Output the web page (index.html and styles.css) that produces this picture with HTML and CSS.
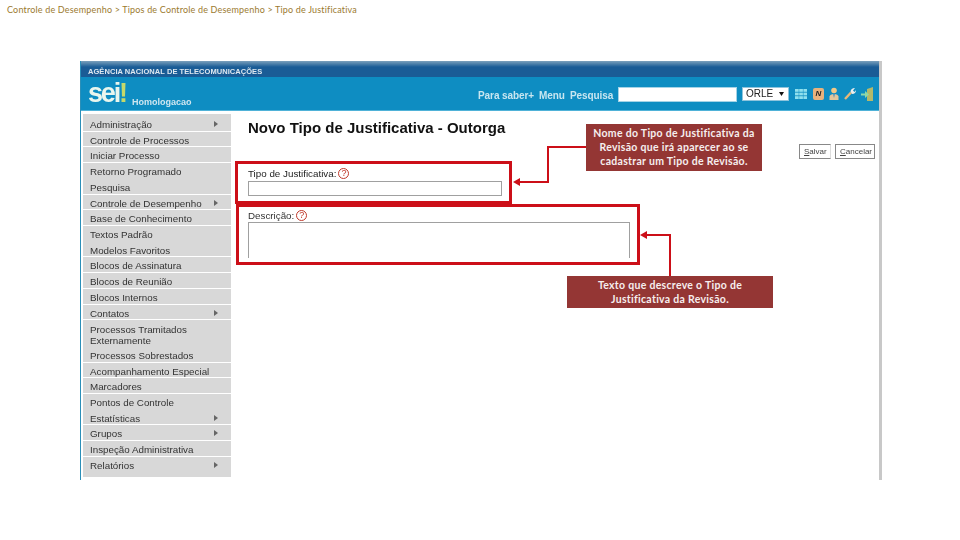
FILE: index.html
```html
<!DOCTYPE html>
<html lang="pt-BR">
<head>
<meta charset="utf-8">
<title>Tipo de Justificativa</title>
<link rel="stylesheet" href="styles.css">
</head>
<body>
<p class="crumbs">Controle de Desempenho &gt; Tipos de Controle de Desempenho &gt; Tipo de Justificativa</p>
<div class="shot">
  <div class="app">
    <div class="agency">AGÊNCIA NACIONAL DE TELECOMUNICAÇÕES</div>
    <header class="top">
      <div class="logo">sei<span class="logo-x">!</span></div>
      <div class="env">Homologacao</div>
      <nav class="links"><span>Para saber+</span><span>Menu</span><span>Pesquisa</span></nav>
      <div class="search"></div>
      <div class="select">ORLE<svg class="caret" width="5" height="4" viewBox="0 0 5 4"><path d="M0 0h5L2.500 4z" fill="#111"/></svg></div>
      <div class="icons">
        <svg class="icon-grid" width="12" height="12" viewBox="0 0 12 12"><g fill="#8fe0ee"><rect y="1" width="3.700" height="2.800"/><rect x="4.200" y="1" width="3.700" height="2.800"/><rect x="8.400" y="1" width="3.600" height="2.800"/><rect y="4.600" width="3.700" height="2.800"/><rect x="4.200" y="4.600" width="3.700" height="2.800"/><rect x="8.400" y="4.600" width="3.600" height="2.800"/><rect y="8.200" width="3.700" height="2.800"/><rect x="4.200" y="8.200" width="3.700" height="2.800"/><rect x="8.400" y="8.200" width="3.600" height="2.800"/></g></svg>
        <span class="badge-n">N</span>
        <svg width="10" height="13" viewBox="0 0 10 13"><circle cx="5" cy="3.500" r="2.800" fill="#f2c987"/><path d="M0.500 13V9.500Q1 7 5 7t4.500 2.500V13z" fill="#e3c69a"/><path d="M4 7h2l-1 4z" fill="#4d8fc0"/></svg>
        <svg width="12" height="13" viewBox="0 0 12 13"><path d="M1 12L7 5.500" stroke="#e8b878" stroke-width="2.400" fill="none"/><path d="M6.500 4.500Q7 1 11 1L9 3.500l1.500 1.500L12 3q0 4-4 4z" fill="#eee"/></svg>
        <svg width="12" height="14" viewBox="0 0 12 14"><path d="M6 2l6-2v14H6z" fill="#b4b96a"/><path d="M0 6.500h4V4l4 3.500-4 3.500V8.500H0z" fill="#8ed8a8"/></svg>
      </div>
    </header>
    <div class="body">
      <ul class="menu">
        <li>Administração<i></i></li>
        <li>Controle de Processos</li>
        <li>Iniciar Processo</li>
        <li class="flat">Retorno Programado</li>
        <li>Pesquisa</li>
        <li>Controle de Desempenho<i></i></li>
        <li>Base de Conhecimento</li>
        <li class="flat">Textos Padrão</li>
        <li>Modelos Favoritos</li>
        <li>Blocos de Assinatura</li>
        <li>Blocos de Reunião</li>
        <li>Blocos Internos</li>
        <li>Contatos<i></i></li>
        <li class="two">Processos Tramitados Externamente</li>
        <li>Processos Sobrestados</li>
        <li>Acompanhamento Especial</li>
        <li>Marcadores</li>
        <li class="flat">Pontos de Controle</li>
        <li>Estatísticas<i></i></li>
        <li>Grupos<i></i></li>
        <li>Inspeção Administrativa</li>
        <li class="flat">Relatórios<i></i></li>
      </ul>
      <main class="content">
        <div class="head">
          <h1>Novo Tipo de Justificativa - Outorga</h1>
          <div class="actions">
            <button class="btn"><u>S</u>alvar</button>
            <button class="btn"><u>C</u>ancelar</button>
          </div>
        </div>
        <div class="field">
          <label class="lbl strong">Tipo de Justificativa:<span class="help">?</span></label>
          <div class="input"></div>
        </div>
        <div class="field field-desc">
          <label class="lbl">Descrição:<span class="help">?</span></label>
          <div class="area"></div>
        </div>
      </main>
    </div>
  </div>
  <svg class="marks" width="802" height="419" viewBox="0 0 802 419">
    <g fill="none" stroke="#cc0f18">
      <rect x="156.500" y="101.500" width="274" height="40" stroke-width="3"/>
      <rect x="157.500" y="144.500" width="401" height="58" stroke-width="3"/>
      <path d="M506 86H468V121H440" stroke-width="2"/>
      <path d="M590 215V174H566" stroke-width="2"/>
    </g>
    <path d="M433 121l7-4v8zM560 174l7-4v8z" fill="#cc0f18"/>
  </svg>
  <div class="note note-a">Nome do Tipo de Justificativa da Revisão que irá aparecer ao se cadastrar um Tipo de Revisão.</div>
  <div class="note note-b">Texto que descreve o Tipo de Justificativa da Revisão.</div>
</div>
</body>
</html>
```
FILE: styles.css
```css
* { box-sizing: border-box; }
html, body { margin: 0; padding: 0; }
body { width: 960px; height: 540px; background: #fff; overflow: hidden; font-family: "Liberation Sans", Arial, sans-serif; }

.crumbs {
  margin: 0;
  padding: 4px 0 0 7px;
  height: 61px;
  font: 9px/11px Lato, sans-serif;
  letter-spacing: .18px;
  color: #9b7a2f;
}

.shot { position: relative; width: 802px; height: 419px; margin-left: 80px; }
.app {
  width: 802px; height: 419px; overflow: hidden;
  border-left: 1px solid #2b8fb8;
  border-right: 3px solid #c8c8c8;
  filter: blur(.35px);
}

.agency {
  height: 16px;
  padding: 6px 0 0 7px;
  background: linear-gradient(#7ba0bc 0, #1a5c96 6px);
  color: #dfe8f0;
  font-size: 7.500px; line-height: 10px; font-weight: bold;
  letter-spacing: .06px;
}

.top {
  height: 34px;
  display: flex; align-items: center;
  background: #0e8dc2;
  border-bottom: 1px solid #4fb2d8;
  padding-left: 7px;
}
.logo { color: #e9f6ee; font-size: 27px; line-height: 30px; font-weight: bold; letter-spacing: -2.200px; width: 37px; height: 32px; white-space: nowrap; }
.logo-x { color: #c5d96a; }
.env { color: #cfe6f0; font-size: 9px; font-weight: bold; margin: 16px 0 0 7px; width: 346px; }
.links { display: flex; gap: 5px; color: #c8e6f0; font-size: 10px; font-weight: bold; width: 140px; margin-top: 3px; letter-spacing: -.08px; }
.search { width: 119px; height: 15px; margin-top: 2px; background: #fff; border: 1px solid #a5d3e6; }
.select {
  width: 47px; height: 14px; margin-left: 5px; margin-top: 1px;
  background: #fff; border: 1px solid #8fc4dc;
  font-size: 10px; line-height: 12px; color: #222; padding-left: 3px;
  display: flex; align-items: center; justify-content: space-between;
}
.caret { margin-right: 4px; }
.icons { display: flex; align-items: center; gap: 5px; margin-left: 6px; }
.icon-grid { margin-right: 1px; }
.badge-n {
  width: 11px; height: 12px; border-radius: 2px; background: #e8b27c;
  color: #222; font: italic bold 8px/12px "Liberation Sans", sans-serif; text-align: center;
}

.body { display: flex; height: 369px; background: #fff; }

.menu { list-style: none; margin: 3px 0 0 2px; padding: 2px 0 6px; width: 148px; height: 363px; flex: none; background: #d8d8d8; }
.menu li {
  position: relative;
  height: 15.720px;
  padding: 2px 0 0 7px;
  border-bottom: 1px solid #fff;
  color: #333;
  font-size: 9.800px; line-height: 13px;
  white-space: nowrap;
}
.menu li.flat { border-bottom-color: #d8d8d8; }
.menu li.two { height: 26.500px; white-space: normal; line-height: 11px; padding-top: 4px; padding-right: 20px; border-bottom-color: #d8d8d8; }
.menu li i {
  position: absolute; right: 13px; top: 5px;
  border-left: 4px solid #666; border-top: 3px solid transparent; border-bottom: 3px solid transparent;
}

.content { flex: 1; padding: 8px 4px 0 17px; }
.head { display: flex; justify-content: space-between; height: 42px; }
h1 { margin: 0; font-size: 15px; line-height: 18px; font-weight: bold; color: #111; }
.actions { display: flex; gap: 4px; margin-top: 25px; }
.btn {
  height: 15px; padding: 0 4px; background: #fff; border: 1px solid #888; border-radius: 0;
  font: 8px/13px "Liberation Sans", sans-serif; color: #444;
}
.btn:first-child { width: 32px; border-right-color: #ddd; }
.btn:last-child { width: 40px; }

.field { height: 31px; margin-top: 6px; }
.lbl { display: block; height: 14px; font-size: 9.800px; line-height: 13px; color: #333; }
.lbl.strong { color: #222; }
.help {
  display: inline-block; width: 11px; height: 11px; margin-left: 2px;
  border: 1px solid #c0392b; border-radius: 50%;
  color: #c0392b; font-size: 9px; line-height: 9px; text-align: center;
  vertical-align: 1px;
}
.input { width: 254px; height: 15px; border: 1px solid #a0a0a0; }
.field-desc { margin-top: 11px; height: 60px; }
.field-desc .lbl { height: 13px; }
.area { width: 382px; height: 36px; border: 1px solid #a0a0a0; border-bottom: 0; }

.marks { position: absolute; left: 0; top: 0; pointer-events: none; }
.note {
  position: absolute;
  background: #943634;
  color: #f6eeee;
  font: bold 10.500px/14px Lato, sans-serif;
  letter-spacing: .3px;
  text-align: center;
}
.note-a { left: 506px; top: 63px; width: 176px; height: 47px; padding: 2px 4px 0; }
.note-b { left: 487px; top: 215px; width: 206px; height: 32px; padding: 2px 16px 0; }
```
